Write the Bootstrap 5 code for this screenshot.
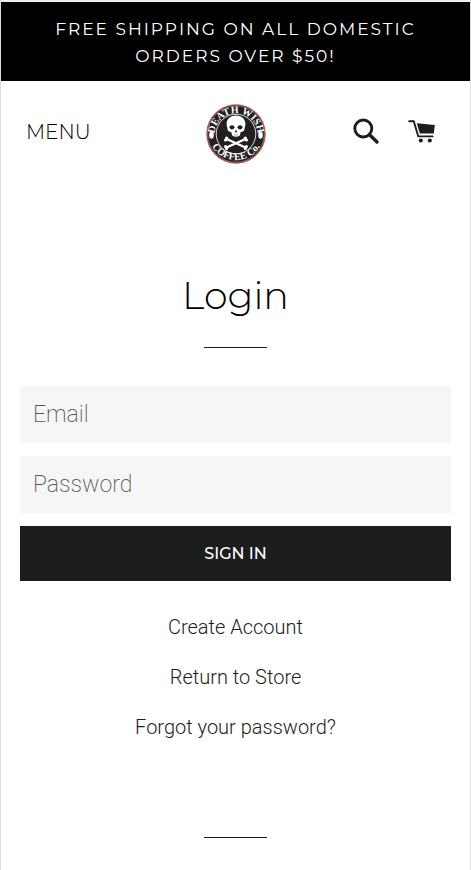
<!DOCTYPE html>
<html lang="en">
<head>
<meta charset="utf-8">
<meta name="viewport" content="width=device-width, initial-scale=1">
<title>Login – Death Wish Coffee Co.</title>
<link href="https://cdn.jsdelivr.net/npm/bootstrap@5.3.0/dist/css/bootstrap.min.css" rel="stylesheet">
<style>
:root { --ink: #1c1d1d; --head: Montserrat, Inter, "Open Sans", sans-serif; --copy: Roboto, sans-serif; }
body { font-family: var(--copy); font-weight: 300; color: var(--ink); }
.page { border: 1px solid #ddd; border-width: 0 1px; }
.promo { border-top: 2px solid #eceff1; background: #000; }
.promo p { font: 400 17px/27px var(--head); letter-spacing: 2px; padding: 14px 40px 11px; }
.site-head { padding: 23px 25px 20px; }
.menu-btn { font: 300 20px/30px var(--head); color: #000; }
.brand svg, .tool svg { display: block; }
.tools { gap: 28px; }
.tool { color: var(--ink); }
.cart { margin-right: 10px; }
.login { padding: 84px 19px 32px; }
.login h1 { font: 300 38px/56px var(--head); color: #000; }
.rule { width: 63px; height: 1px; background: var(--ink); }
.title-rule { margin-top: 23px; margin-bottom: 38px; }
.fields { gap: 13px; }
.field { height: 57px; border: 0; border-radius: 0; background: #f6f6f6; font-size: 23px; font-weight: 200; padding: 0 13px; }
.field::placeholder { color: #555; }
.field:focus { background: #f0f0f0; }
.sign-in { height: 55px; border-radius: 0; background: var(--ink); color: #fff; font: 500 16px/24px var(--head); }
.sign-in:hover { background: #333; color: #fff; }
.links { gap: 20px; margin-top: 31px; font-size: 20px; line-height: 30px; }
.links a { color: var(--ink); }
.foot { padding: 63px 0 32px; }
</style>
</head>
<body>
<div class="page min-vh-100">
  <div class="promo text-white text-center"><p class="mb-0">FREE SHIPPING ON ALL DOMESTIC ORDERS OVER $50!</p></div>
  <header class="site-head row g-0 align-items-center">
    <div class="col text-start pb-1"><button type="button" class="menu-btn btn p-0 border-0">MENU</button></div>
    <a class="brand col-auto" href="#" aria-label="Death Wish Coffee Co.">
      <svg width="60" height="60" viewBox="0 0 60 60">
        <defs>
          <path id="arc-top" d="M8.500 33A21.600 21.600 0 1 1 51.500 33"/>
          <path id="arc-bottom" d="M2 28A28 28 0 0 0 58 28"/>
        </defs>
        <circle cx="30" cy="30" r="29.200" fill="#231f20" stroke="#e0413d" stroke-width="1" stroke-dasharray="5 1"/>
        <circle cx="30" cy="30" r="28.300" fill="none" stroke="#c9c5c5" stroke-width=".5"/>
        <circle cx="30" cy="30" r="19.800" fill="none" stroke="#eee" stroke-width=".9"/>
        <g fill="#fff" font-family="Liberation Serif, serif" font-weight="700" font-size="10" text-anchor="middle">
          <text><textPath href="#arc-top" startOffset="50%">DEATH WISH</textPath></text>
          <text><textPath href="#arc-bottom" startOffset="50%">COFFEE Co.</textPath></text>
        </g>
        <g fill="#fff">
          <ellipse cx="5.500" cy="31" rx="2.300" ry="3.700"/><ellipse cx="54.500" cy="31" rx="2.300" ry="3.700"/>
          <path d="M30 11.500c-6 0-9.400 3.700-9.400 8.500 0 2.200.9 3.500.9 5 0 1.800 1.100 2.500 3.200 2.900.9.200 1 1 1.100 2.400.1 1.600 1.600 2.500 4.200 2.500s4.100-.9 4.200-2.500c.1-1.400.2-2.200 1.100-2.400 2.100-.4 3.200-1.100 3.200-2.900 0-1.500.9-2.800.9-5 0-4.800-3.400-8.500-9.400-8.500z"/>
        </g>
        <g fill="#231f20"><ellipse cx="26" cy="23.300" rx="2.500" ry="2.100"/><ellipse cx="34" cy="23.300" rx="2.500" ry="2.100"/><path d="M30 25.500l-1.300 2.700h2.600z"/></g>
        <path d="M28.400 30v1.800M30 30v2M31.600 30v1.800" stroke="#555" stroke-width=".4"/>
        <path d="M20.500 35l19 8.500M39.500 35l-19 8.500" stroke="#fff" stroke-width="2.400"/>
        <g fill="#fff"><circle cx="20.600" cy="34.200" r="1.600"/><circle cx="19.600" cy="36" r="1.600"/><circle cx="39.400" cy="34.200" r="1.600"/><circle cx="40.400" cy="36" r="1.600"/><circle cx="19.600" cy="42.500" r="1.600"/><circle cx="20.600" cy="44.500" r="1.600"/><circle cx="40.400" cy="42.500" r="1.600"/><circle cx="39.400" cy="44.500" r="1.600"/></g>
      </svg>
    </a>
    <div class="tools col d-flex justify-content-end align-items-center pb-1">
      <button type="button" class="tool btn p-0 border-0" aria-label="Search">
        <svg width="28" height="28" viewBox="0 0 28 28" fill="none" stroke="currentColor"><circle cx="11.300" cy="10.500" r="8.500" stroke-width="2.900"/><path d="M17.500 16.700l7.500 7.300" stroke-width="3.400" stroke-linecap="round"/></svg>
      </button>
      <a class="tool cart" href="#" aria-label="Cart">
        <svg width="27" height="28" viewBox="0 0 27 28" fill="none" stroke="currentColor"><path d="M1.200 3.200h4.600l4.500 15.200h14.300" stroke-width="1.900" stroke-linecap="round" stroke-linejoin="round"/><path d="M8.800 5.200l18 1.700-1 8.500-14 .1z" fill="currentColor" stroke="none"/><circle cx="12.800" cy="22.500" r="2.100" fill="currentColor" stroke="none"/><circle cx="21.800" cy="22.500" r="2.100" fill="currentColor" stroke="none"/></svg>
      </a>
    </div>
  </header>
  <main class="login">
    <h1 class="text-center mb-0">Login</h1>
    <div class="rule title-rule mx-auto"></div>
    <form class="fields d-grid">
      <input class="field form-control shadow-none" id="email" type="email" placeholder="Email" aria-label="Email">
      <input class="field form-control shadow-none" id="password" type="password" placeholder="Password" aria-label="Password">
      <button type="submit" class="sign-in btn border-0 w-100">SIGN IN</button>
    </form>
    <nav class="links d-flex flex-column align-items-center" aria-label="Account">
      <a class="text-decoration-none" href="#">Create Account</a>
      <a class="text-decoration-none" href="#">Return to Store</a>
      <a class="text-decoration-none" href="#">Forgot your password?</a>
    </nav>
  </main>
  <footer class="foot"><div class="rule mx-auto"></div></footer>
</div>
<script src="https://cdn.jsdelivr.net/npm/bootstrap@5.3.0/dist/js/bootstrap.bundle.min.js"></script>
</body>
</html>
